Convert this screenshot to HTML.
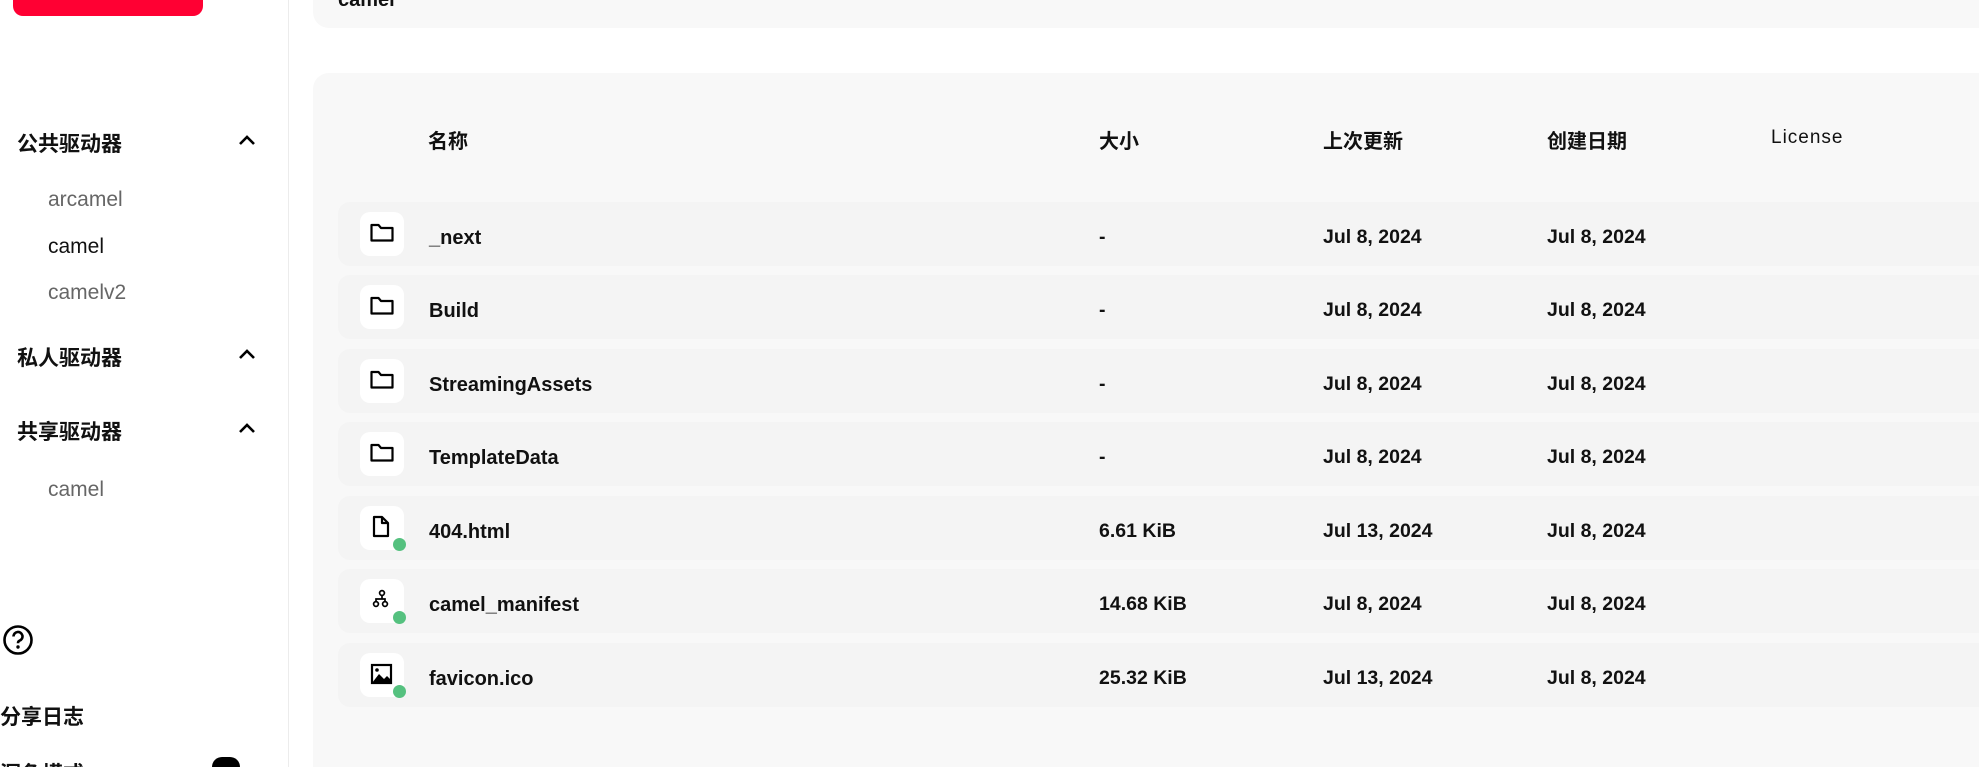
<!DOCTYPE html>
<html style="width:1979px;height:767px;overflow:hidden"><head><meta charset="utf-8"><style>
*{margin:0;padding:0;box-sizing:border-box}
body{width:1979px;height:767px;overflow:hidden;background:#fff;font-family:"Liberation Sans","Noto Sans CJK SC",sans-serif;color:#111;position:relative}
.abs{position:absolute}
.side{left:0;top:0;width:289px;height:767px;border-right:1px solid #ececec}
.red{left:13px;top:0;width:190px;height:16px;background:#ff0033;border-radius:0 0 10px 10px}
.sh{font-size:21px;left:17px;font-weight:bold}
.chev{left:236px;width:22px;height:22px}
.si{left:48px;font-size:21px;color:#666}
.card{background:#f8f8f8}
.hd{top:125px;font-size:20px;font-weight:bold}
.row{left:338px;width:1641px;height:64px;background:#f4f4f4;border-radius:12px 0 0 12px}
.ib{left:360px;width:44px;height:44px;background:#fff;border-radius:10px}
.dot{position:absolute;right:-2px;bottom:-1px;width:13px;height:13px;border-radius:50%;background:#55c17f}
.t{font-size:19.5px;font-weight:bold;color:#111}
.n{font-size:20px}
</style></head><body>
<div class="abs side"></div>
<div class="abs red"></div>
<div class="abs sh" style="top:128px">公共驱动器</div>
<svg class="abs chev" style="top:130px" viewBox="0 0 22 22"><path d="M4 14 11 7 18 14" fill="none" stroke="#000" stroke-width="2.6"/></svg>
<div class="abs si" style="top:188px">arcamel</div>
<div class="abs si" style="top:235px;color:#111">camel</div>
<div class="abs si" style="top:281px">camelv2</div>
<div class="abs sh" style="top:342px">私人驱动器</div>
<svg class="abs chev" style="top:344px" viewBox="0 0 22 22"><path d="M4 14 11 7 18 14" fill="none" stroke="#000" stroke-width="2.6"/></svg>
<div class="abs sh" style="top:416px">共享驱动器</div>
<svg class="abs chev" style="top:418px" viewBox="0 0 22 22"><path d="M4 14 11 7 18 14" fill="none" stroke="#000" stroke-width="2.6"/></svg>
<div class="abs si" style="top:478px">camel</div>
<svg class="abs" style="left:2px;top:624px" width="32" height="32" viewBox="0 0 32 32"><circle cx="16" cy="16" r="13.5" fill="none" stroke="#000" stroke-width="2.6"/><path d="M11.5 12.5a4.5 4.5 0 1 1 6 4.2c-1.2.5-1.5 1.2-1.5 2.6" fill="none" stroke="#000" stroke-width="2.6"/><circle cx="16" cy="23" r="1.7"/></svg>
<div class="abs" style="left:0;top:701px;font-size:21px;font-weight:bold">分享日志</div>
<div class="abs" style="left:0;top:758px;font-size:21px;font-weight:bold;height:9px;overflow:hidden">深色模式</div>
<div class="abs" style="left:212px;top:757px;width:28px;height:10px;border-radius:14px 14px 0 0;background:#000"></div>

<div class="abs card" style="left:313px;top:0;width:1666px;height:28px;border-radius:0 0 0 16px"></div>
<div class="abs" style="left:338px;top:0;font-size:20px;font-weight:bold;height:6px;overflow:hidden;line-height:0">camel</div>
<div class="abs card" style="left:313px;top:73px;width:1666px;height:694px;border-radius:16px 0 0 0"></div>
<div class="abs hd" style="left:428px">名称</div>
<div class="abs hd" style="left:1099px">大小</div>
<div class="abs hd" style="left:1323px">上次更新</div>
<div class="abs hd" style="left:1547px">创建日期</div>
<div class="abs hd" style="left:1771px;font-size:19px;font-weight:normal;letter-spacing:1px;top:127px">License</div>

<div class="abs row" style="top:202px"></div><div class="abs row" style="top:275px"></div><div class="abs row" style="top:349px"></div><div class="abs row" style="top:422px"></div><div class="abs row" style="top:496px"></div><div class="abs row" style="top:569px"></div><div class="abs row" style="top:643px"></div>

<div class="abs ib" style="top:212px"><svg width="44" height="44" viewBox="0 0 44 44"><path d="M11.5 13h7l2.5 3h11.5v12.5h-21z" fill="none" stroke="#000" stroke-width="2.2" stroke-linejoin="round"/></svg></div>
<div class="abs ib" style="top:285px"><svg width="44" height="44" viewBox="0 0 44 44"><path d="M11.5 13h7l2.5 3h11.5v12.5h-21z" fill="none" stroke="#000" stroke-width="2.2" stroke-linejoin="round"/></svg></div>
<div class="abs ib" style="top:359px"><svg width="44" height="44" viewBox="0 0 44 44"><path d="M11.5 13h7l2.5 3h11.5v12.5h-21z" fill="none" stroke="#000" stroke-width="2.2" stroke-linejoin="round"/></svg></div>
<div class="abs ib" style="top:432px"><svg width="44" height="44" viewBox="0 0 44 44"><path d="M11.5 13h7l2.5 3h11.5v12.5h-21z" fill="none" stroke="#000" stroke-width="2.2" stroke-linejoin="round"/></svg></div>
<div class="abs ib" style="top:506px"><svg width="44" height="44" viewBox="0 0 44 44"><path d="M14 11h8l6 6v13H14z M22 11v6h6" fill="none" stroke="#000" stroke-width="2.2" stroke-linejoin="round"/></svg><div class="dot"></div></div>
<div class="abs ib" style="top:579px"><svg width="44" height="44" viewBox="0 0 44 44"><g fill="none" stroke="#000" stroke-width="1.7"><circle cx="22" cy="14" r="2.4"/><circle cx="16" cy="25" r="2.4"/><circle cx="25" cy="25" r="2.4"/><path d="M22 16.5v3.5M16 22.5V20h9v2.5"/></g></svg><div class="dot"></div></div>
<div class="abs ib" style="top:653px"><svg width="44" height="44" viewBox="0 0 44 44"><rect x="12" y="12" width="19" height="18" fill="none" stroke="#000" stroke-width="2.2"/><path d="M12 30 19 21 24 26 27 23 31 27V30z" fill="#000"/><circle cx="17" cy="17" r="1.8"/></svg><div class="dot"></div></div>

<div class="abs t n" style="left:429px;top:227px">_next</div>
<div class="abs t n" style="left:429px;top:300px">Build</div>
<div class="abs t n" style="left:429px;top:374px">StreamingAssets</div>
<div class="abs t n" style="left:429px;top:447px">TemplateData</div>
<div class="abs t n" style="left:429px;top:521px">404.html</div>
<div class="abs t n" style="left:429px;top:594px">camel_manifest</div>
<div class="abs t n" style="left:429px;top:668px">favicon.ico</div>

<div class="abs t" style="left:1099px;top:226px">-</div>
<div class="abs t" style="left:1099px;top:299px">-</div>
<div class="abs t" style="left:1099px;top:373px">-</div>
<div class="abs t" style="left:1099px;top:446px">-</div>
<div class="abs t" style="left:1099px;top:520px">6.61 KiB</div>
<div class="abs t" style="left:1099px;top:593px">14.68 KiB</div>
<div class="abs t" style="left:1099px;top:667px">25.32 KiB</div>

<div class="abs t" style="left:1323px;top:226px">Jul 8, 2024</div>
<div class="abs t" style="left:1323px;top:299px">Jul 8, 2024</div>
<div class="abs t" style="left:1323px;top:373px">Jul 8, 2024</div>
<div class="abs t" style="left:1323px;top:446px">Jul 8, 2024</div>
<div class="abs t" style="left:1323px;top:520px">Jul 13, 2024</div>
<div class="abs t" style="left:1323px;top:593px">Jul 8, 2024</div>
<div class="abs t" style="left:1323px;top:667px">Jul 13, 2024</div>

<div class="abs t" style="left:1547px;top:226px">Jul 8, 2024</div>
<div class="abs t" style="left:1547px;top:299px">Jul 8, 2024</div>
<div class="abs t" style="left:1547px;top:373px">Jul 8, 2024</div>
<div class="abs t" style="left:1547px;top:446px">Jul 8, 2024</div>
<div class="abs t" style="left:1547px;top:520px">Jul 8, 2024</div>
<div class="abs t" style="left:1547px;top:593px">Jul 8, 2024</div>
<div class="abs t" style="left:1547px;top:667px">Jul 8, 2024</div>
</body></html>
